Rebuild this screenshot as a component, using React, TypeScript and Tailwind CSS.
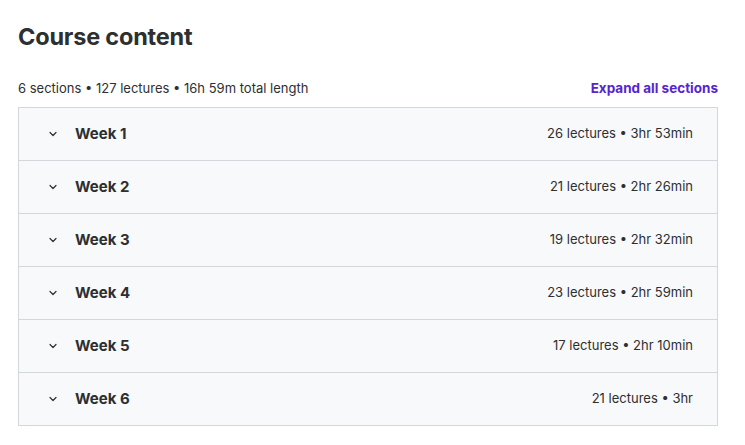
const weeks = [
  { name: "Week 1", info: "26 lectures • 3hr 53min" },
  { name: "Week 2", info: "21 lectures • 2hr 26min" },
  { name: "Week 3", info: "19 lectures • 2hr 32min" },
  { name: "Week 4", info: "23 lectures • 2hr 59min" },
  { name: "Week 5", info: "17 lectures • 2hr 10min" },
  { name: "Week 6", info: "21 lectures • 3hr" },
];

function Chevron() {
  return (
    <svg width="12" height="12" viewBox="0 0 24 24" fill="none" stroke="#2d2f31" strokeWidth="2.4" strokeLinecap="round" strokeLinejoin="round">
      <path d="M6 9l6 6 6-6" />
    </svg>
  );
}

export default function App() {
  return (
    <div className="min-h-[445px] w-[745px] bg-white px-[18px] pt-[22px] text-[#2d2f31] font-['Inter',sans-serif]">
      <div className="w-[700px]">
        <h2 className="text-[23.5px] font-bold leading-[30px] tracking-[-0.2px]">Course content</h2>

        <div className="mt-[27px] flex items-center justify-between">
          <span className="text-[13px] leading-[18px]">6 sections • 127 lectures • 16h 59m total length</span>
          <button className="text-[13.5px] font-bold leading-[18px] text-[#5624d0]">Expand all sections</button>
        </div>

        <div className="mt-[10px] border border-[#d1d7dc]">
          {weeks.map((w, i) => (
            <div
              key={w.name}
              className={
                "flex h-[52px] items-center justify-between bg-[#f7f9fa] pl-[28px] pr-[24px] " +
                (i > 0 ? "box-content border-t border-[#d1d7dc]" : "")
              }
            >
              <div className="flex items-center gap-[16px]">
                <Chevron />
                <span className="text-[15px] font-bold">{w.name}</span>
              </div>
              <span className="text-[13px]">{w.info}</span>
            </div>
          ))}
        </div>
      </div>
    </div>
  );
}
